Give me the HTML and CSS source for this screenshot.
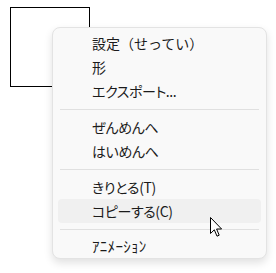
FILE: index.html
```html
<!DOCTYPE html>
<html lang="ja">
<head>
    <meta charset="UTF-8">
    <meta name="viewport" content="width=device-width, initial-scale=1.0">
    <title>メニュー</title>
    <link rel="stylesheet" href="styles.css">
</head>
<body>
    <!-- Canvas -->
    <div class="canvas">
        <div class="shape"></div>
    </div>

    <!-- Context menu -->
    <div class="menu">
        <div class="item wide">設定（せってい）</div>
        <div class="item">形</div>
        <div class="item">エクスポート...</div>
        <div class="sep"></div>
        <div class="item">ぜんめんへ</div>
        <div class="item">はいめんへ</div>
        <div class="sep"></div>
        <div class="item">きりとる(T)</div>
        <div class="item hover">コピーする(C)</div>
        <div class="sep"></div>
        <div class="item small">ｱﾆﾒｰｼｮﾝ</div>
    </div>

    <!-- Mouse pointer -->
    <svg class="cursor" width="13" height="21" viewBox="0 0 13 21">
        <path d="M0.5 0.5 L0.5 16.5 L4.3 12.8 L7 19.2 L9.2 18.2 L6.6 12 L11.6 12 Z" fill="#fff" stroke="#000" stroke-width="1" stroke-linejoin="round"/>
    </svg>
</body>
</html>
```

FILE: styles.css
```css
* {
    margin: 0;
    padding: 0;
    box-sizing: border-box;
}

body {
    font-family: "Noto Sans CJK JP", "Noto Sans", sans-serif;
    background-color: #ffffff;
    color: #1b1b1b;
    width: 276px;
    height: 273px;
    overflow: hidden;
}

/* Canvas */
.canvas {
    padding: 7px 0 0 10px;
}

.shape {
    width: 80px;
    height: 80px;
    border: 1px solid #000;
}

/* Context menu */
.menu {
    position: absolute;
    left: 52px;
    top: 27px;
    width: 215px;
    padding: 3px 5px 0 5px;
    background: #f9f9f9;
    border: 1px solid #e3e3e3;
    border-radius: 8px;
    box-shadow: 0 4px 8px rgba(0, 0, 0, 0.12);
}

.menu .item {
    height: 24px;
    line-height: 24px;
    padding-left: 34px;
    font-size: 14px;
    font-feature-settings: "palt";
    letter-spacing: -0.4px;
    border-radius: 4px;
    white-space: nowrap;
}

.menu .item.wide {
    font-feature-settings: normal;
    letter-spacing: 0;
}

.menu .item.hover {
    background: #f0f0f0;
}

.menu .item.small {
    height: 23px;
    line-height: 22px;
    font-size: 15px;
    font-feature-settings: normal;
    letter-spacing: 0.3px;
}

.menu .sep {
    height: 12px;
    margin: 0 2px;
    display: flex;
    align-items: center;
}

.menu .sep::before {
    content: "";
    flex: 1;
    height: 1px;
    background: #e0e0e0;
}

/* Pointer */
.cursor {
    position: absolute;
    left: 210px;
    top: 217px;
}
```
